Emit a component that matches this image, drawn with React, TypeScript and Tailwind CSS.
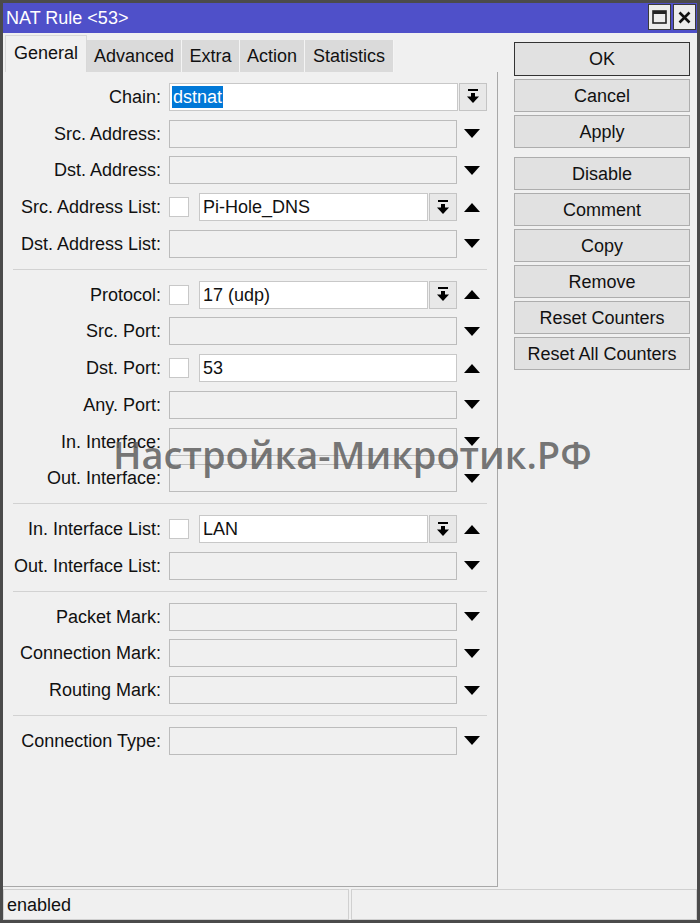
import type { ReactNode } from "react";

const FONT = { fontFamily: '"Liberation Sans", Arial, sans-serif' };

function DownTri() {
  return (
    <svg width="16" height="9" viewBox="0 0 16 9" className="block">
      <polygon points="0,0 16,0 8,9" fill="#000" />
    </svg>
  );
}

function UpTri() {
  return (
    <svg width="16" height="9" viewBox="0 0 16 9" className="block">
      <polygon points="0,9 16,9 8,0" fill="#000" />
    </svg>
  );
}

function DropButton() {
  return (
    <div className="flex h-[28px] w-[28px] items-center justify-center border border-[#c4c4c4] bg-[#e8e8e8]">
      <svg width="12" height="15" viewBox="0 0 12 15" className="block">
        <rect x="1" y="0" width="10" height="2" fill="#000" />
        <rect x="4" y="4" width="4" height="4" fill="#000" />
        <polygon points="0,7.5 12,7.5 6,14" fill="#000" />
      </svg>
    </div>
  );
}

function Row({ label, children }: { label: string; children: ReactNode }) {
  return (
    <div className="flex h-[36.75px] items-center">
      <div className="w-[158px] whitespace-nowrap text-right">{label}</div>
      <div className="ml-2 flex items-center">{children}</div>
    </div>
  );
}

function GrayField({ label }: { label: string }) {
  return (
    <Row label={label}>
      <div className="h-[28px] w-[288px] border border-[#bcbcbc] bg-[#f0f0f0]" />
      <div className="ml-[7px]">
        <DownTri />
      </div>
    </Row>
  );
}

function Checkbox() {
  return <div className="h-[20px] w-[20px] border border-[#c8c8c8] bg-white" />;
}

function ListField({ label, value, drop = true }: { label: string; value: string; drop?: boolean }) {
  return (
    <Row label={label}>
      <Checkbox />
      <div
        className={`ml-[10px] flex h-[28px] items-center border border-[#c8c8c8] bg-white pl-[3px] ${
          drop ? "w-[229px]" : "w-[258px]"
        }`}
      >
        {value}
      </div>
      {drop ? (
        <div className="ml-[1px]">
          <DropButton />
        </div>
      ) : null}
      <div className="ml-[7px]">
        <UpTri />
      </div>
    </Row>
  );
}

function Sep() {
  return (
    <div className="flex h-[14px] items-center pl-[10px] pr-[10px]">
      <div className="h-0 w-full border-t border-[#d2d2d2]" />
    </div>
  );
}

const tabs = [
  { name: "Advanced", w: "w-[95px]" },
  { name: "Extra", w: "w-[58px]" },
  { name: "Action", w: "w-[65px]" },
  { name: "Statistics", w: "w-[89px]" },
];

const buttons = ["Cancel", "Apply", "Disable", "Comment", "Copy", "Remove", "Reset Counters", "Reset All Counters"];

export default function App() {
  return (
    <div
      style={FONT}
      className="relative h-[923px] w-[700px] overflow-hidden border-[3px] border-[#4b4b4b] bg-[#f0f0f0] text-[18px] leading-none text-[#111]"
    >
      {/* title bar */}
      <div className="flex h-[30px] items-center justify-between bg-[#4f50c9] pl-[3px] pr-[1px]">
        <span className="text-[18px] text-white">NAT Rule &lt;53&gt;</span>
        <div className="flex gap-[2px] pb-[2px]">
          <div className="flex h-[26px] w-[23px] items-center justify-center border border-[#3a3a3a] bg-[#ececec]">
            <svg width="15" height="14" viewBox="0 0 15 14" className="block">
              <rect x="1" y="1" width="13" height="12" fill="none" stroke="#222" strokeWidth="1.6" />
              <rect x="1" y="1" width="13" height="3" fill="#222" />
            </svg>
          </div>
          <div className="flex h-[26px] w-[23px] items-center justify-center border border-[#3a3a3a] bg-[#ececec]">
            <svg width="13" height="13" viewBox="0 0 13 13" className="block">
              <path d="M1.5 1.5 L11.5 11.5 M11.5 1.5 L1.5 11.5" stroke="#111" strokeWidth="2.6" />
            </svg>
          </div>
        </div>
      </div>

      <div className="flex">
        {/* left: tabs + panel */}
        <div className="w-[495px]">
          <div className="flex h-[39px] items-end pl-[2px]">
            <div className="flex h-[37px] w-[82px] items-start justify-center border-x border-t border-[#d8d8d8] bg-[#f0f0f0] pt-[8px]">
              General
            </div>
            {tabs.map((t) => (
              <div
                key={t.name}
                className={`flex h-[32px] items-center justify-center border-r border-[#f4f4f4] bg-[#dadada] ${t.w}`}
              >
                {t.name}
              </div>
            ))}
          </div>
          <div className="h-[815px] border-b border-r border-[#a8a8a8] pt-[6.5px]">
            <Row label="Chain:">
              <div className="flex h-[28px] w-[289px] items-center border border-[#c8c8c8] bg-white pl-[2px]">
                <span className="bg-[#0078d7] px-[1px] py-[2px] text-white">dstnat</span>
              </div>
              <div className="ml-[1px]">
                <DropButton />
              </div>
            </Row>
            <GrayField label="Src. Address:" />
            <GrayField label="Dst. Address:" />
            <ListField label="Src. Address List:" value="Pi-Hole_DNS" />
            <GrayField label="Dst. Address List:" />
            <Sep />
            <ListField label="Protocol:" value="17 (udp)" />
            <GrayField label="Src. Port:" />
            <ListField label="Dst. Port:" value="53" drop={false} />
            <GrayField label="Any. Port:" />
            <GrayField label="In. Interface:" />
            <GrayField label="Out. Interface:" />
            <Sep />
            <ListField label="In. Interface List:" value="LAN" />
            <GrayField label="Out. Interface List:" />
            <Sep />
            <GrayField label="Packet Mark:" />
            <GrayField label="Connection Mark:" />
            <GrayField label="Routing Mark:" />
            <Sep />
            <GrayField label="Connection Type:" />
          </div>
        </div>

        {/* right: buttons */}
        <div className="flex w-[199px] flex-col pl-[16px] pt-[9px]">
          <div className="flex h-[34px] w-[176px] items-center justify-center border border-[#333] bg-[#e1e1e1]">
            OK
          </div>
          {buttons.map((b, i) => (
            <div
              key={b}
              className={`flex h-[33px] w-[176px] items-center justify-center border border-[#adadad] bg-[#e1e1e1] ${
                i === 2 ? "mt-[9px]" : "mt-[3px]"
              }`}
            >
              {b}
            </div>
          ))}
        </div>
      </div>

      {/* status bar */}
      <div className="flex h-[33px] gap-[2px] pt-[2px]">
        <div className="flex h-[31px] w-[346px] items-center border border-[#d0d0d0] pl-[3px]">enabled</div>
        <div className="h-[31px] flex-1 border border-[#d0d0d0]" />
      </div>

      {/* watermark overlay */}
      <div
        className="pointer-events-none absolute left-[110px] top-[432px] whitespace-nowrap text-[38px] font-semibold text-[#5f5f5f]/85"
        style={{ fontFamily: '"Open Sans", "Noto Sans", sans-serif' }}
      >
        Настройка-Микротик.РФ
      </div>
    </div>
  );
}
